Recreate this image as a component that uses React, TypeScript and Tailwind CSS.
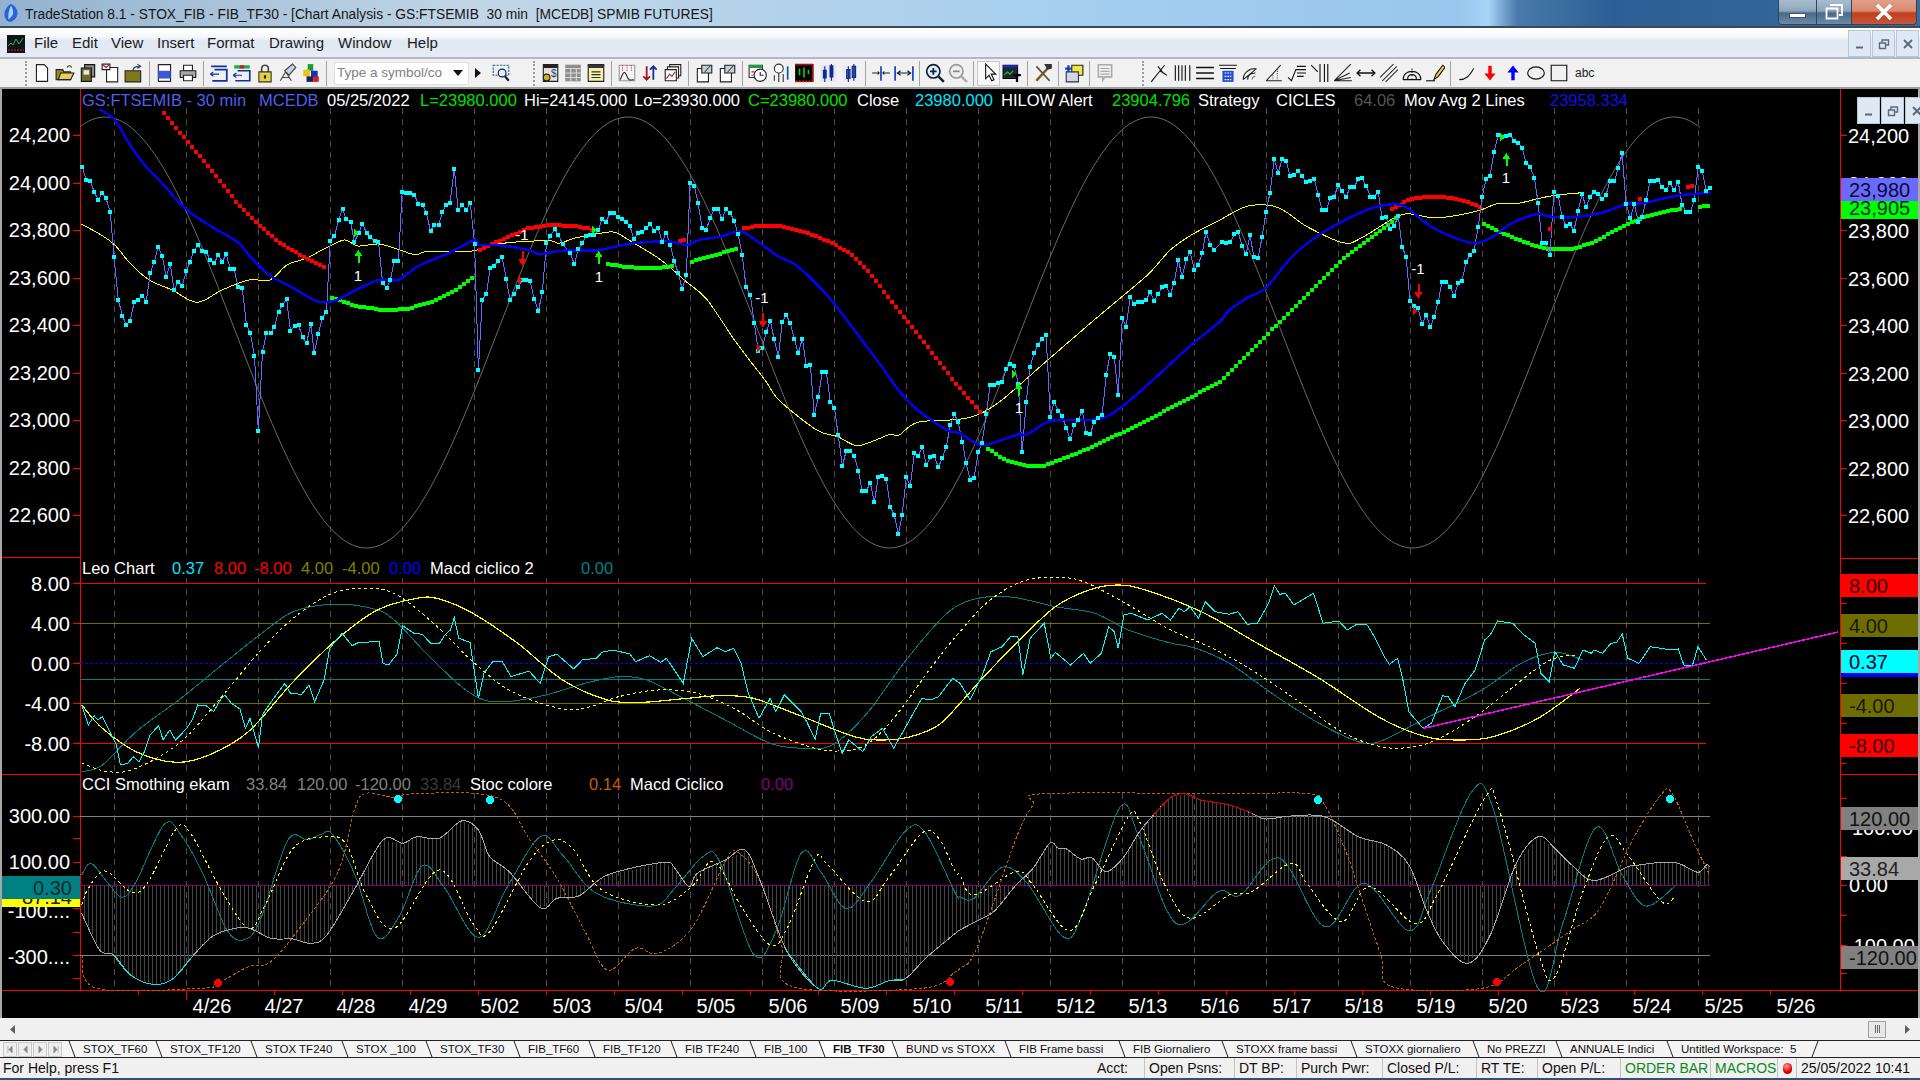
import type { ReactNode } from 'react'

type Pt = [number, number]

// traced values: flat x,y lists in the scale of each crop of the chart
const conv = (ox: number, oy: number, sx: number, sy: number) => (f: number[]): Pt[] => {
  const out: Pt[] = []
  for (let i = 0; i < f.length; i += 2) out.push([ox + f[i] / sx, oy + f[i + 1] / sy])
  return out
}
const z8 = conv(0, 90, 2.613, 3)
const z9 = conv(560, 100, 2.376, 3)
const z10 = conv(1200, 100, 2.8, 3)
const z11 = conv(80, 555, 1.782, 3)
const z12 = conv(960, 555, 1.782, 3)

const line = (p: Pt[]) => p.map((q) => q[0].toFixed(1) + ',' + q[1].toFixed(1)).join(' ')

const smooth = (p: Pt[]) => {
  let d = `M${p[0][0].toFixed(1)} ${p[0][1].toFixed(1)}`
  for (let i = 0; i < p.length - 1; i++) {
    const a = p[Math.max(i - 1, 0)]
    const b = p[i]
    const c = p[i + 1]
    const e = p[Math.min(i + 2, p.length - 1)]
    d += `C${(b[0] + (c[0] - a[0]) / 6).toFixed(1)} ${(b[1] + (c[1] - a[1]) / 6).toFixed(1)} ${(c[0] - (e[0] - b[0]) / 6).toFixed(1)} ${(c[1] - (e[1] - b[1]) / 6).toFixed(1)} ${c[0].toFixed(1)} ${c[1].toFixed(1)}`
  }
  return d
}

const yAt = (p: Pt[], x: number) => {
  for (let i = 0; i < p.length - 1; i++) {
    if (x >= p[i][0] && x <= p[i + 1][0]) {
      const t = (x - p[i][0]) / (p[i + 1][0] - p[i][0] || 1)
      return p[i][1] + (p[i + 1][1] - p[i][1]) * t
    }
  }
  return p[p.length - 1][1]
}

const sample = (p: Pt[]): Pt[] => {
  const out: Pt[] = []
  for (let x = Math.ceil(p[0][0] / 4) * 4; x <= p[p.length - 1][0]; x += 4) out.push([x, yAt(p, x)])
  return out
}

const price: Pt[] = [
  ...z8([215,230,225,270,236,272,246,305,257,330,267,308,277,325,288,365,298,500,309,630,320,678,330,705,340,692,351,635,361,630,372,617,382,635,393,548,403,515,413,472,424,497,434,560,445,523,455,600,466,575,476,588,487,542,497,515,507,482,518,464,528,484,539,485,549,510,560,520,570,495,581,515,591,493,602,537,612,538,622,590,633,595,644,705,654,730,665,797,675,1023,686,785,696,730,707,730,717,710,728,665,738,645,749,627,759,722,770,707,780,705,791,742,801,760,812,702,821,789,832,732,842,685,853,665,863,452,874,437,885,390,895,357,905,388,916,397,926,455,937,430,947,402,958,428,968,442,979,453,989,456,1000,580,1010,594,1020,570,1030,513,1041,513,1051,305,1062,308,1072,310,1083,315,1093,342,1104,346,1114,368,1125,423,1135,404,1146,404,1156,366,1166,345,1176,338,1187,236,1197,360,1208,345,1218,360,1229,340,1240,462,1250,840,1260,630,1271,612,1281,534,1291,528,1302,512,1312,500,1323,568,1333,630,1344,612,1354,592,1365,570,1375,570,1385,572,1396,628,1407,663,1417,607,1428,460,1438,438,1449,418,1459,434,1470,462,1490,490,1501,522,1511,478,1522,460,1532,437,1542,435,1553,435,1563,420]),
  ...z9([100,357,109,365,119,340,128,340,138,350,147,358,157,367,166,378,176,418,185,398,195,396,205,385,214,372,224,392,233,385,243,425,252,398,262,435,271,482,281,520,290,567,300,525,309,250,319,257,328,308,338,385,347,390,357,355,366,328,376,328,385,357,395,328,404,338,414,362,423,403,433,465,442,560,452,585,462,670,471,752,481,745,490,695,500,662,509,718,519,770,528,665,538,645,547,670,557,717,566,760,576,716,585,797,595,795,604,945,614,892,623,815,633,815,642,905,652,923,661,1005,671,1098,680,1052,690,1052,699,1067,709,1113,718,1173,728,1173,737,1148,747,1207,756,1130,766,1128,775,1137,785,1222,794,1244,804,1302,813,1244,823,1130,832,1158,842,1060,851,1067,861,1040,870,1095,880,1072,889,1067,899,1102,908,1075,918,1040,927,975,937,943,946,965,956,1025,965,1090,975,1140,984,1133,994,1055,1003,1028,1013,942,1022,855,1032,855,1041,850,1051,847,1060,808,1070,792,1079,797,1089,852,1098,1055,1108,905,1117,800,1127,758,1136,735,1146,717,1155,705,1165,950,1174,905,1184,932,1193,948,1203,985,1212,1017,1222,975,1231,960,1241,932,1250,998,1260,1002,1269,965,1279,955,1288,945,1298,825,1307,762,1317,770,1326,885,1336,655,1345,680,1355,592,1364,612,1374,605,1383,607,1393,600,1402,577,1412,603,1421,583,1431,562,1440,557,1450,585,1459,548,1469,480,1478,530,1488,478,1497,455,1507,510,1516,495,1526,460,1535,395,1545,435,1554,450]),
  ...z10([62,427,73,428,85,425,96,403,107,397,118,437,129,462,140,405,151,472,163,473,174,410,185,335,196,278,208,178,219,218,230,178,241,182,252,228,264,225,275,212,286,228,297,245,309,242,320,238,331,284,342,330,354,330,365,295,376,290,387,255,398,272,409,292,421,260,432,260,443,238,454,235,465,257,477,290,488,290,499,275,510,355,521,352,532,388,544,378,555,348,566,440,577,470,588,602,600,618,611,625,622,672,633,645,645,680,656,652,667,605,678,545,689,545,701,562,712,588,723,550,734,542,745,485,756,465,767,452,779,382,790,290,801,237,812,228,823,157,835,105,846,110,857,108,868,104,880,122,891,128,902,143,913,188,924,200,936,233,947,310,958,430,969,428,980,465,991,275,1003,288,1014,350,1025,378,1036,372,1047,392,1059,332,1070,283,1081,322,1092,292,1103,275,1115,282,1126,297,1137,284,1148,242,1160,244,1171,205,1182,160,1193,312,1205,355,1216,312,1227,365,1238,350,1249,300,1260,243,1272,242,1283,240,1294,262,1305,270,1316,250,1328,270,1339,245,1350,315,1361,335,1373,337,1384,300,1395,200,1406,212,1417,272,1428,264]),
]

const maBlue: Pt[] = [
  ...z8([260,58,300,90,340,165,385,235,420,275,470,340,500,370,560,415,620,455,650,495,675,525,710,560,760,590,820,630,850,637,880,630,930,600,990,570,1040,570,1090,530,1140,505,1180,485,1240,450,1250,465,1300,465,1380,480,1410,492,1470,482,1540,482]),
  ...z9([95,450,150,435,200,427,260,424,300,435,330,420,380,410,430,395,470,425,520,470,560,495,620,565,660,625,720,725,770,810,810,880,850,930,920,990,950,1000,1000,1035,1050,1020,1090,1003,1110,1003,1160,965,1210,960,1280,957,1330,925,1400,850,1500,735,1568,665]),
  ...z10([80,632,130,595,185,563,245,485,300,430,380,375,460,333,510,317,570,317,640,375,710,412,770,430,820,410,870,372,940,343,990,351,1050,351,1130,337,1193,312,1240,310,1300,295,1350,285,1430,278]),
]

const maYellow: Pt[] = [
  ...z8([212,402,260,432,300,465,340,520,390,570,450,600,515,637,580,600,650,570,705,570,750,525,800,505,850,475,900,450,935,468,990,462,1040,478,1085,494,1120,484,1230,484,1300,462,1430,452,1460,460,1500,445,1540,436]),
  ...z9([95,400,130,397,170,425,240,480,300,545,350,600,420,730,490,845,520,900,610,990,660,1010,705,1037,750,1020,785,1003,805,1006,850,967,950,958,1000,940,1050,900,1150,790,1260,670,1340,585,1400,520,1450,450,1500,405,1568,360]),
  ...z10([80,345,135,318,200,317,240,335,300,380,400,428,450,415,550,350,590,342,640,352,690,351,780,332,830,312,890,310,950,295,1000,285,1070,278]),
]

const reds: Pt[][] = [
  z8([423,62,490,155,560,250,620,340,680,408,730,458,800,505,855,535]),
  [...z8([1250,482,1300,455,1380,415,1440,405,1500,408,1540,415]), ...z9([0,375,40,378,80,390])],
  z9([280,423,300,420]),
  z9([430,387,470,377,520,378,580,395,640,425,690,460,740,525,800,625,870,735,940,850,1003,942]),
  z10([530,330,590,297,640,290,690,292,740,303,785,320]),
  z10([1225,300,1243,292]),
  z10([1360,262,1388,257]),
]

const greens: Pt[][] = [
  z8([860,620,930,648,1000,660,1060,658,1130,635,1190,600,1240,560]),
  z9([105,490,150,500,200,505,245,503,272,495]),
  z9([307,487,370,465,425,443]),
  [...z9([1010,1040,1060,1082,1110,1097,1150,1097,1230,1060,1340,995,1450,925,1568,845]), ...z10([100,800,200,690,300,585,400,478,500,397,555,350])],
  z10([790,370,870,410,930,435,975,448,1040,448,1100,428,1190,375,1260,345,1350,325]),
  z10([1395,320,1430,317]),
]

const cycle: Pt[] = []
for (let x = 80; x <= 1705; x += 6) cycle.push([x, 332.5 - 215.5 * Math.cos((2 * Math.PI * (x - 105)) / 523)])

const leo: Pt[] = [
  ...z11([3,450,15,510,25,482,32,495,40,485,52,525,65,570,72,630,85,625,95,605,105,620,115,590,125,540,140,512,148,555,160,525,170,555,182,535,190,520,200,495,210,450,225,452,238,470,250,435,258,420,270,445,285,462,295,520,303,490,318,578,325,480,345,430,365,385,375,415,395,418,408,390,418,440,435,375,445,280,467,235,485,272,497,262,533,260,540,325,550,330,565,297,575,212,595,235,610,238,625,265,640,267,650,240,660,225,667,188,675,250,695,262,710,430,720,355,735,320,752,318,768,365,800,348,820,385,835,305,850,298,880,342,895,315,920,310,930,292,950,285,980,297,990,320,1015,302,1035,322,1045,310,1075,385,1090,250,1110,305,1135,278,1150,290,1165,280,1178,325,1190,410,1210,490,1230,430,1240,470,1255,420,1285,470,1295,500,1310,553,1320,475,1335,475,1345,530,1358,595,1370,555,1395,590,1410,545,1430,520,1450,580,1470,520,1490,460,1500,430,1515,435,1530,425,1555,370]),
  ...z12([0,385,18,435,40,360,55,290,75,275,90,245,103,245,112,360,125,250,150,205,162,310,170,292,197,330,220,295,232,325,252,295,265,215,275,230,282,280,292,180,305,175,335,195,360,175,375,195,390,160,400,170,410,155,425,190,437,140,455,170,480,178,495,170,512,208,530,205,550,145,560,92,570,118,580,115,595,150,610,135,630,115,647,205,675,198,690,225,705,210,725,208,740,250,755,302,765,328,780,310,790,380,800,470,825,520,840,505,860,422,870,425,882,455,900,385,918,345,935,255,945,240,958,198,985,205,1005,240,1025,265,1035,355,1050,380,1060,290,1075,330,1095,340,1110,285,1125,295,1130,285,1145,295,1160,265,1170,262,1180,237,1190,310,1210,325,1230,275,1250,280,1265,285,1280,282,1290,330,1305,333,1315,275,1330,315]),
]

const macdTeal: Pt[] = [
  ...z11([3,650,40,630,100,530,180,430,260,320,320,240,380,170,450,148,520,160,560,195,620,300,680,395,720,435,760,440,830,420,900,385,960,365,1010,375,1070,425,1150,495,1230,565,1290,580,1340,570,1400,480,1470,320,1530,200]),
  ...z12([0,148,50,125,100,128,170,155,240,175,300,225,370,262,420,280,480,325,560,420,640,505,710,560,750,558,830,490,930,405,1000,325,1060,292,1110,315]),
]

const macdYellow: Pt[] = [
  ...z11([3,450,40,520,100,590,170,622,230,600,300,530,380,380,460,250,530,165,600,130,640,132,700,175,780,265,860,375,940,435,1000,442,1070,432,1140,422,1200,430,1280,480,1380,545,1430,555,1480,545,1530,510]),
  ...z12([0,445,40,370,100,265,170,155,230,105,280,90,330,105,430,170,530,265,640,370,750,490,830,545,890,555,950,545,1030,490,1105,400]),
]

const macdDash: Pt[] = [
  ...z11([3,625,50,650,100,640,180,560,250,430,320,290,380,190,450,115,520,100,570,125,640,220,700,320,770,410,860,462,910,455,960,425,1030,405,1100,415,1170,465,1230,530,1300,575,1350,588,1400,570,1450,490,1520,330]),
  ...z12([0,230,50,140,110,80,170,67,220,80,290,140,370,220,450,280,520,345,600,435,680,530,750,575,810,575,860,545,930,470,1020,350,1060,310,1100,300]),
]

const cci: Pt[] = [
  ...z11([3,1075,35,1185,60,1200,90,1260,130,1288,165,1272,200,1205,240,1140,295,1118,340,1150,380,1152,410,1165,440,1140,490,1000,540,855,575,865,600,845,640,850,680,798,710,825,730,905,765,950,820,1058,850,1030,890,1022,940,960,1040,922,1060,940,1085,995,1100,955,1150,915,1185,885,1215,990,1260,1190,1315,1300,1340,1276,1400,1300,1440,1278,1470,1272,1510,1205,1560,1135]),
  ...z12([0,1125,30,1098,60,1070,100,990,130,940,160,865,175,880,190,882,215,912,235,908,260,950,290,910,320,830,345,780,375,728,400,716,430,735,480,750,520,775,545,792,590,783,650,785,710,845,760,870,800,930,830,1060,860,1160,905,1225,945,1140,990,930,1030,845,1060,880,1090,930,1130,977,1190,935,1210,930,1250,922,1280,925,1315,952,1330,930,1336,935]),
]

const cciTeal: Pt[] = [
  ...z11([3,960,20,925,50,985,75,1027,100,980,150,808,180,840,220,960,260,1120,290,1155,320,1100,370,857,405,855,430,838,450,838,490,960,530,1147,570,1080,610,932,650,1000,710,1147,760,1000,820,845,860,900,920,1015,1020,1053,1060,1000,1110,905,1140,920,1200,1197,1240,1130,1285,895,1320,950,1365,1060,1410,980,1470,830,1505,830,1560,1015]),
  ...z12([0,1025,25,1030,75,937,120,985,185,1147,220,1070,285,757,320,850,385,1105,460,1010,500,1020,570,910,650,1115,720,985,800,1127,840,1000,910,715,950,760,1030,1300,1075,1100,1133,818,1180,960,1222,1053,1275,992]),
]

const cciYellow: Pt[] = [
  ...z11([3,1050,15,1000,45,948,90,1010,120,985,170,825,195,830,250,1000,300,1120,330,1050,380,880,440,845,475,870,510,1020,560,1120,640,945,700,1105,730,1130,800,920,845,855,880,885,930,1005,1030,1050,1090,995,1130,920,1180,1060,1230,1170,1260,1120,1310,912,1330,925,1400,1040,1440,970,1500,835,1530,850,1560,950]),
  ...z12([0,960,25,1020,100,950,130,990,195,1127,240,990,300,785,320,800,365,990,410,1090,480,1020,520,1010,590,925,620,990,680,1100,730,995,810,1105,850,1020,935,730,960,760,1030,1190,1060,1265,1110,1010,1155,845,1190,900,1250,1040,1275,1022]),
]

const cciOrange: Pt[] = [
  ...z11([3,1200,30,1300,215,1300,246,1285,300,1235,340,1220,400,1100,460,950,490,760,510,715,560,727,590,717,700,715,760,745,800,850,850,970,900,1130,940,1245,990,1180,1030,1195,1090,1120,1150,920,1170,890,1210,970,1250,1170,1270,1295,1500,1300,1560,1250]),
  ...z12([0,1240,30,1180,100,850,130,750,150,716,480,716,620,716,650,750,690,900,710,1000,750,1200,770,1295,930,1300,1000,1230,1090,1125,1140,1060,1200,850,1250,718,1270,718,1310,870,1336,960]),
]

const hatch = sample(cci)
const dayLines = Array.from({ length: 23 }, (_, i) => 114 + i * 72)
const dates = ['4/26','4/27','4/28','4/29','5/02','5/03','5/04','5/05','5/06','5/09','5/10','5/11','5/12','5/13','5/16','5/17','5/18','5/19','5/20','5/23','5/24','5/25','5/26']
const dateTicks = [138, 186, ...Array.from({ length: 23 }, (_, i) => 274 + i * 68)]

const legend: [number, number, string, string][] = [
  [82, 106, '#4f5fe8', 'GS:FTSEMIB - 30 min'],
  [259, 106, '#4f5fe8', 'MCEDB'],
  [327, 106, '#ffffff', '05/25/2022'],
  [420, 106, '#00e000', 'L=23980.000'],
  [524, 106, '#ffffff', 'Hi=24145.000'],
  [634, 106, '#ffffff', 'Lo=23930.000'],
  [748, 106, '#00e000', 'C=23980.000'],
  [857, 106, '#ffffff', 'Close'],
  [915, 106, '#00e5ff', '23980.000'],
  [1001, 106, '#ffffff', 'HILOW Alert'],
  [1112, 106, '#00e000', '23904.796'],
  [1198, 106, '#ffffff', 'Strategy'],
  [1276, 106, '#ffffff', 'CICLES'],
  [1354, 106, '#555555', '64.06'],
  [1404, 106, '#ffffff', 'Mov Avg 2 Lines'],
  [1550, 106, '#1010e0', '23958.334'],
  [82, 574, '#ffffff', 'Leo Chart'],
  [172, 574, '#00e5ff', '0.37'],
  [214, 574, '#ff0000', '8.00'],
  [254, 574, '#ff0000', '-8.00'],
  [301, 574, '#808000', '4.00'],
  [342, 574, '#808000', '-4.00'],
  [389, 574, '#0000ff', '0.00'],
  [430, 574, '#ffffff', 'Macd ciclico 2'],
  [581, 574, '#008080', '0.00'],
  [82, 790, '#ffffff', 'CCI Smothing ekam'],
  [246, 790, '#808080', '33.84'],
  [297, 790, '#808080', '120.00'],
  [355, 790, '#808080', '-120.00'],
  [420, 790, '#3a3a3a', '33.84'],
  [470, 790, '#ffffff', 'Stoc colore'],
  [589, 790, '#c06000', '0.14'],
  [630, 790, '#ffffff', 'Macd Ciclico'],
  [761, 790, '#800080', '0.00'],
]

const prices = ['24,200','24,000','23,800','23,600','23,400','23,200','23,000','22,800','22,600']

const UpArrow = ({ x, y }: { x: number; y: number }) => (
  <path d={`M${x - 1} ${y + 13}V${y + 6}H${x - 4}L${x} ${y}L${x + 4} ${y + 6}H${x + 1}V${y + 13}Z`} fill="#00ff00" />
)
const DownArrow = ({ x, y }: { x: number; y: number }) => (
  <path d={`M${x - 1} ${y}V${y + 8}H${x - 4}L${x} ${y + 15}L${x + 4} ${y + 8}H${x + 1}V${y}Z`} fill="#ff0000" />
)

function Chart() {
  return (
    <svg viewBox="2 89 1916 929" shapeRendering="crispEdges" className="h-[929px] w-[1916px] font-['Liberation_Sans',sans-serif]">
      {/* frame */}
      <path d="M80.5 89V990M1840.5 89V990" stroke="#ff0000" fill="none" />
      <path d="M2 990.5H1918M2 774.5H80M1840 774.5H1918M1840 558.5H1918M2 557.5H80" stroke="#ff0000" fill="none" />

      {/* day separators */}
      {dayLines.map((x) => (
        <path key={x} d={`M${x}.5 108V557M${x}.5 578V772M${x}.5 793V990`} stroke="#4c4c4c" strokeDasharray="6 5" fill="none" />
      ))}

      {/* price panel */}
      <path d={smooth(cycle)} stroke="#6a6a6a" fill="none" shapeRendering="auto" />
      <path d={smooth(maYellow)} stroke="#ffff00" fill="none" />
      {greens.map((g, i) => sample(g).map((q) => <rect key={`g${i}-${q[0]}`} x={q[0] - 2} y={q[1] - 2} width="4" height="4" fill="#00ff00" />))}
      {reds.map((g, i) => sample(g).map((q) => <rect key={`r${i}-${q[0]}`} x={q[0] - 2} y={q[1] - 2} width="4" height="4" fill="#ff0000" />))}
      <polyline points={line(price)} stroke="#6868ff" fill="none" />
      <path d={smooth(maBlue)} stroke="#0000ff" strokeWidth="2.4" fill="none" />
      {price.map((q, i) => <rect key={i} x={q[0] - 2} y={q[1] - 2} width="4" height="4" fill="#00ffff" />)}

      <UpArrow x={358.5} y={250} /><text x={358} y={281} fontSize="15" fill="#fff" textAnchor="middle">1</text>
      <UpArrow x={598.7} y={251} /><text x={599} y={282} fontSize="15" fill="#fff" textAnchor="middle">1</text>
      <UpArrow x={1018.7} y={383} /><text x={1019} y={413} fontSize="15" fill="#fff" textAnchor="middle">1</text>
      <UpArrow x={1506.5} y={153} /><text x={1506} y={183} fontSize="15" fill="#fff" textAnchor="middle">1</text>
      <DownArrow x={522.5} y={251} /><text x={522} y={240} fontSize="15" fill="#fff" textAnchor="middle">-1</text>
      <DownArrow x={763} y={313} /><text x={762} y={303} fontSize="15" fill="#fff" textAnchor="middle">-1</text>
      <DownArrow x={1418.5} y={284} /><text x={1418} y={274} fontSize="15" fill="#fff" textAnchor="middle">-1</text>
      <path d="M354 229l5 4-5 4zM592 226l5 4-5 4zM1012 370l5 4-5 4zM1500 133l5 4-5 4z" fill="#00ff00" />
      <path d="M518 276l5 4-5 4zM757 344l5 4-5 4zM1413 307l5 4-5 4z" fill="#ff0000" />
      <rect x="1548" y="227" width="4" height="4" fill="#ff0000" />

      {/* leo panel */}
      <path d="M80 583.5H1706M80 743.5H1706" stroke="#ff0000" fill="none" />
      <path d="M80 623.5H1710M80 703.5H1710" stroke="#707000" fill="none" />
      <path d="M80 679.5H1710" stroke="#008080" fill="none" />
      <path d="M80 663.5H1710" stroke="#0000ff" strokeWidth="1.5" strokeDasharray="3 2" fill="none" />
      <path d={smooth(macdTeal)} stroke="#008080" fill="none" />
      <path d={smooth(macdDash)} stroke="#ffff00" strokeDasharray="3 3" fill="none" />
      <path d={smooth(macdYellow)} stroke="#ffff00" strokeWidth="1.2" fill="none" />
      <polyline points={line(leo)} stroke="#00ffff" fill="none" />
      <path d="M1423 728.5L1838 632" stroke="#ff00ff" strokeWidth="1.5" fill="none" />

      {/* cci panel */}
      <path d="M80 816.5H1710M80 955.5H1710" stroke="#808080" fill="none" />
      {hatch.map((q) => <path key={q[0]} d={`M${q[0]}.5 885.5V${q[1].toFixed(1)}`} stroke="#444444" fill="none" />)}
      <path d="M80 885.5H1710" stroke="#800080" fill="none" />
      <path d={smooth(cciTeal)} stroke="#008080" fill="none" />
      <path d={smooth(cciYellow)} stroke="#ffff00" strokeDasharray="3 3" fill="none" />
      <path d={smooth(cciOrange)} stroke="#c06000" strokeDasharray="3 2" fill="none" />
      <path d={smooth(cci)} stroke="#a8a8a8" fill="none" />
      <path d={smooth(cci.filter((q) => q[0] > 110 && q[0] < 196))} stroke="#00e8f0" fill="none" />
      <path d={smooth(cci.filter((q) => q[0] > 785 && q[0] < 905))} stroke="#00e8f0" fill="none" />
      <path d={smooth(cci.filter((q) => q[0] > 1460 && q[0] < 1490))} stroke="#00e8f0" fill="none" />
      <path d={smooth(cci.filter((q) => q[0] > 1150 && q[0] < 1262))} stroke="#e00000" fill="none" />
      <circle cx="398" cy="799" r="4" fill="#00ffff" />
      <circle cx="490" cy="800" r="4" fill="#00ffff" />
      <circle cx="1318" cy="800" r="4" fill="#00ffff" />
      <circle cx="1670" cy="799" r="4" fill="#00ffff" />
      <circle cx="218" cy="983" r="4" fill="#ff0000" />
      <circle cx="950" cy="982" r="4" fill="#ff0000" />
      <circle cx="1497" cy="982" r="4" fill="#ff0000" />

      {/* legends */}
      {legend.map(([x, y, c, t]) => (
        <text key={x + '-' + y} x={x} y={y} fontSize="16.5" fill={c}>{t}</text>
      ))}

      {/* left axis */}
      {prices.map((p, i) => (
        <g key={p}>
          <path d={`M73 ${135.5 + i * 47.5}H80`} stroke="#ff0000" fill="none" />
          <text x={70} y={142 + i * 47.5} fontSize="20" fill="#fff" textAnchor="end">{p}</text>
        </g>
      ))}
      {['8.00','4.00','0.00','-4.00','-8.00'].map((p, i) => (
        <g key={p}>
          <path d={`M73 ${583.5 + i * 40}H80`} stroke="#ff0000" fill="none" />
          <text x={70} y={591 + i * 40} fontSize="20" fill="#fff" textAnchor="end">{p}</text>
        </g>
      ))}
      {[816, 838, 862, 885, 908, 932, 955, 978].map((y) => <path key={y} d={`M73 ${y}.5H80`} stroke="#ff0000" fill="none" />)}
      <text x={70} y={823} fontSize="20" fill="#fff" textAnchor="end">300.00</text>
      <text x={70} y={869} fontSize="20" fill="#fff" textAnchor="end">100.00</text>
      <text x={70} y={918} fontSize="20" fill="#fff" textAnchor="end">-100....</text>
      <text x={70} y={964} fontSize="20" fill="#fff" textAnchor="end">-300....</text>
      <rect x="2" y="888" width="78" height="19" fill="#ffff00" />
      <text x={72} y={904} fontSize="20" fill="#222" textAnchor="end">-87.14</text>
      <rect x="2" y="876" width="78" height="23" fill="#008080" />
      <text x={72} y={895} fontSize="20" fill="#0a2a30" textAnchor="end">0.30</text>

      {/* right axis */}
      {prices.map((p, i) => (
        <g key={p}>
          <path d={`M1841 ${135.5 + i * 47.5}H1847`} stroke="#ff0000" fill="none" />
          <text x={1848} y={143 + i * 47.5} fontSize="20" fill="#fff">{p}</text>
        </g>
      ))}
      <rect x="1841" y="178" width="77" height="23" fill="#6a6aff" />
      <rect x="1841" y="201" width="77" height="18" fill="#00ff00" />
      <text x={1849} y={197} fontSize="20" fill="#0a0a30">23,980</text>
      <text x={1849} y={215} fontSize="20" fill="#033">23,905</text>

      {[603, 643, 683, 723, 763, 798, 856, 885, 915, 945, 973].map((y) => <path key={y} d={`M1840 ${y}.5H1847`} stroke="#ff0000" fill="none" />)}
      <rect x="1841" y="574" width="77" height="23" fill="#ff0000" />
      <rect x="1841" y="614" width="77" height="23" fill="#6e6e00" />
      <rect x="1841" y="650" width="77" height="23" fill="#00ffff" />
      <rect x="1841" y="673" width="77" height="4" fill="#0000ff" />
      <rect x="1841" y="694" width="77" height="23" fill="#6e6e00" />
      <rect x="1841" y="734" width="77" height="23" fill="#ff0000" />
      <text x={1849} y={593} fontSize="20" fill="#300">8.00</text>
      <text x={1849} y={633} fontSize="20" fill="#1a1a00">4.00</text>
      <text x={1849} y={669} fontSize="20" fill="#003">0.37</text>
      <text x={1849} y={713} fontSize="20" fill="#1a1a00">-4.00</text>
      <text x={1849} y={753} fontSize="20" fill="#300">-8.00</text>
      <text x={1852} y={835} fontSize="20" fill="#fff">100.00</text>
      <rect x="1841" y="807" width="77" height="23" fill="#808080" />
      <text x={1849} y={826} fontSize="20" fill="#111">120.00</text>
      <text x={1849} y={892} fontSize="20" fill="#fff">0.00</text>
      <rect x="1841" y="857" width="77" height="23" fill="#a8a8a8" />
      <text x={1849} y={876} fontSize="20" fill="#222">33.84</text>
      <text x={1847} y={953} fontSize="20" fill="#fff">-100.00</text>
      <rect x="1841" y="946" width="77" height="23" fill="#808080" />
      <text x={1849} y={965} fontSize="20" fill="#111">-120.00</text>

      {/* time axis */}
      {dateTicks.map((x, i) => <path key={i} d={`M${x}.5 990V${x === 186 ? 1000 : 995}`} stroke="#ff0000" fill="none" />)}
      {dates.map((d, i) => (
        <text key={d} x={212 + i * 72} y={1013} fontSize="20" fill="#fff" textAnchor="middle">{d}</text>
      ))}
    </svg>
  )
}

/* ---------- toolbar icons ---------- */

const S = ({ children }: { children: ReactNode }) => (
  <svg viewBox="0 0 18 18" className="h-[20px] w-[20px]" fill="none">{children}</svg>
)

const icons: Record<string, ReactNode> = {
  doc: <S><path d="M4 1.5h7l3 3v12H4z" fill="#fff" stroke="#222" /></S>,
  open: <S><path d="M1 6h6l1 2h6v7H1z" fill="#9a8a20" stroke="#222" /><path d="M3 15l2-6h12l-3 6z" fill="#e6cf60" stroke="#222" /><path d="M11 4c1-2 3-2 4 0" stroke="#222" /></S>,
  copy: <S><path d="M6 1.5h9v11H6z" fill="#888" stroke="#111" /><path d="M3 4.5h9v12H3z" fill="#6c6a2a" stroke="#111" /><path d="M5 6.5h5v4H5z" fill="#e8e8e8" /></S>,
  note: <S><path d="M5 4h10v13H5z" fill="#fff" stroke="#222" /><path d="M1 1h7v5H1z" fill="#fff" stroke="#222" /><path d="M2 2l2.5 2L7 2" stroke="#c00" /></S>,
  oliveUp: <S><path d="M1 7h14v10H1z" fill="#7e7a1c" stroke="#222" /><path d="M8 7c0-3 3-4 6-4M12 1l3 2-3 2" stroke="#246" /></S>,
  blueDoc: <S><path d="M3 1.5h11v15H3z" fill="#fff" stroke="#223" /><path d="M3 7h11v7H3z" fill="#3a5ad8" /></S>,
  printer: <S><path d="M5 2h8v5H5z" fill="#fff" stroke="#222" /><path d="M2 7h14v6H2z" fill="#aaa" stroke="#222" /><path d="M5 11h8v5H5z" fill="#fff" stroke="#222" /></S>,
  winA: <S><path d="M2 3h14M5 6h11v10H3" stroke="#1030a0" strokeWidth="1.6" /><path d="M1 10h8M1 10l3-2M1 10l3 2" stroke="#1030a0" /></S>,
  winB: <S><path d="M2 2h14v3H2z" fill="#18b040" /><path d="M7 2h4v3H7z" fill="#d02020" /><path d="M5 7h11v9H3" stroke="#1030a0" strokeWidth="1.5" /><path d="M1 11h8M1 11l3-2M1 11l3 2" stroke="#1030a0" /></S>,
  lock: <S><path d="M6 8V5a3 3 0 0 1 6 0v3" stroke="#444" strokeWidth="1.5" /><path d="M3.5 8h11v9h-11z" fill="#e8d040" stroke="#333" /><path d="M8 11h2v3H8z" fill="#222" /></S>,
  dish: <S><path d="M2 16l5-8 5 8M4 13h6" stroke="#444" /><path d="M6 7l7-6 3 3-6 7z" fill="#c8d0e8" stroke="#444" /></S>,
  cubes: <S><path d="M6 1h5v6H6z" fill="#1a9a30" /><path d="M2 6h6v6H2z" fill="#e8c810" /><path d="M9 7h6v6H9z" fill="#1a30c0" /><path d="M5 12h6v5H5z" fill="#202060" /><path d="M11 12h5v5h-5z" fill="#d02020" /></S>,
  search: <S><path d="M2 2h14v9H2z" stroke="#2060a0" strokeDasharray="2 1" /><circle cx="10" cy="9" r="3.5" fill="#e0f0ff" stroke="#123" /><path d="M12.5 12l3.5 4" stroke="#123" strokeWidth="2" /></S>,
  dollar: <S><path d="M3 1.5h13v15H3z" fill="#e4e4d0" stroke="#222" /><path d="M3 1.5h13v3H3z" fill="#222" /><circle cx="6" cy="13" r="3" fill="#d0b020" stroke="#222" /><text x="10" y="13" fontSize="9" fill="#123cb0">$</text></S>,
  greyTable: <S><path d="M2 1.5h14v15H2z" fill="#8e8e8e" /><path d="M2 5h14M2 9h14M2 13h14M7 5v11M12 5v11" stroke="#d8d8d8" /></S>,
  table: <S><path d="M2 1.5h14v15H2z" fill="#f4f0a8" stroke="#222" /><path d="M2 1.5h14v3H2z" fill="#333" /><path d="M5 8h8M5 10.5h8M5 13h8" stroke="#333" /></S>,
  wave: <S><path d="M2 16V2h14v14z" fill="#f4f4f4" stroke="#999" /><path d="M3 15c3-8 4-8 6-3s3 3 6 3" stroke="#222" /><path d="M5 2v5M9 2v5M13 2v5" stroke="#d02040" strokeDasharray="1 1" /></S>,
  updown: <S><path d="M6 3v12M3 12l3 3 3-3" stroke="#a01020" strokeWidth="1.6" /><path d="M12 15V3M9 6l3-3 3 3" stroke="#103090" strokeWidth="1.6" /></S>,
  stack: <S><path d="M6 1.5h10v10H6z" fill="#fff" stroke="#222" /><path d="M4 3.5h10v10H4z" fill="#fff" stroke="#222" /><path d="M2 6h10v10H2z" fill="#fff" stroke="#222" /><path d="M3 14l3-4 2 2 3-4" stroke="#c02020" /></S>,
  note2: <S><path d="M3 5h10v12H3z" fill="#fff" stroke="#222" /><path d="M7 2h9v7H7z" fill="#ccc" stroke="#222" /><path d="M9 9l6-7" stroke="#357" /></S>,
  cal: <S><path d="M1 2h12v11H1z" fill="#fff" stroke="#333" /><path d="M1 2h12v2.5H1z" fill="#18a040" /><circle cx="11" cy="11" r="5.5" fill="#fff" stroke="#222" /><path d="M11 8v3h3" stroke="#222" /><path d="M3 8h3M3 11h2" stroke="#c02020" /></S>,
  dials: <S><circle cx="7" cy="5" r="4" fill="#fff" stroke="#333" /><path d="M7 9v8M3 11v5M11 10v7" stroke="#333" /><path d="M15 3v12" stroke="#1050a0" strokeWidth="1.5" /></S>,
  blackBars: <S><path d="M1 1h16v16H1z" fill="#000" /><path d="M1 1.5h16M17 1v16" stroke="#a01020" strokeWidth="1.5" /><path d="M1 16.5h16" stroke="#e01010" strokeWidth="1.5" strokeDasharray="2 1" /><path d="M5 5v6M9 4v9M13 6v4" stroke="#10d020" strokeWidth="1.4" /></S>,
  bars: <S><path d="M3 1.5h14v15H3z" fill="#e4e8f4" /><path d="M7 6v8M13 2v11" stroke="#102a8a" strokeWidth="3.5" /><path d="M7 3v14M13 1v15" stroke="#102a8a" /></S>,
  candles: <S><path d="M2 2h14v14H2z" fill="#e8eaf4" /><path d="M6 6h3v8H6zM11 3h3v10h-3z" fill="#5a60b0" stroke="#102a8a" /><path d="M7.5 3v14M12.5 1v15" stroke="#102a8a" /></S>,
  tickIn: <S><path d="M1 9h5M12 9h5" stroke="#123" /><path d="M6 7l2 2-2 2M12 7l-2 2 2 2" fill="#123" /><path d="M9 3v13" stroke="#1040b0" strokeWidth="1.5" /></S>,
  tickOut: <S><path d="M1 3v13M17 3v13" stroke="#1040b0" strokeWidth="1.5" /><path d="M3 9h12M6 7L3 9l3 2M12 7l3 2-3 2" stroke="#123" /></S>,
  zoomIn: <S><circle cx="7.5" cy="7.5" r="6" fill="#e0ecff" stroke="#123" strokeWidth="1.5" /><path d="M4.5 7.5h6M7.5 4.5v6" stroke="#123" strokeWidth="1.6" /><path d="M12 12l5 5" stroke="#123" strokeWidth="2.2" /></S>,
  zoomOut: <S><circle cx="7.5" cy="7.5" r="6" fill="#eee" stroke="#9a9a9a" strokeWidth="1.5" /><path d="M4.5 7.5h6" stroke="#888" strokeWidth="1.6" /><path d="M12 12l5 5" stroke="#aaa" strokeWidth="2.2" /></S>,
  pointer: <S><path d="M6 1v13l3-3 2.5 5 2-1-2.5-5h4z" fill="#fff" stroke="#111" /></S>,
  chartT: <S><path d="M1 2h13v12H1z" fill="#223" stroke="#000" /><path d="M1 2h13v2H1z" fill="#1030d0" /><path d="M2 11l3-3 2 2 3-3" stroke="#10d020" /><path d="M10 11h7M13.5 11v6" stroke="#000" strokeWidth="2" /></S>,
  tools: <S><path d="M3 16L14 4" stroke="#7a5a10" strokeWidth="2.2" /><path d="M3 3l12 13" stroke="#555" strokeWidth="1.6" /><path d="M10 1h7v4l-4 1z" fill="#333" /></S>,
  addChart: <S><path d="M7 2h10v9H7z" fill="#f0e840" stroke="#222" /><path d="M2 8h11v9H2z" fill="#d4d4e8" stroke="#334" /><path d="M4 2v6M1 5h6" stroke="#1040c0" strokeWidth="2" /></S>,
  greyNote: <S><path d="M3 1.5h12v11H9l-2 3v-3H3z" fill="#eee" stroke="#aaa" strokeWidth="1.4" /><path d="M5 5h8M5 7.5h8M5 10h8" stroke="#aaa" /></S>,
  pitch: <S><path d="M2 17L10 7M8 3l4 5M14 2l-4 5 6 4" stroke="#111" /></S>,
  vlines: <S><path d="M3 2v14M6 2v14M9 2v14M12 2v14M16 2v14" stroke="#111" /></S>,
  hlines: <S><path d="M1 4h16M1 9h16M1 14h16" stroke="#111" strokeWidth="1.3" /></S>,
  calc: <S><path d="M1 2h16M2 5h14" stroke="#111" /><path d="M4 7h10v10H4z" fill="#2050c8" /><path d="M6 9h6M6 12h6M6 15h6" stroke="#fff" strokeDasharray="1.5 1" /></S>,
  arcs: <S><path d="M2 15c0-6 5-10 11-10M6 15c0-4 3-6 7-6M2 15L14 5" stroke="#222" /><path d="M10 15c0-2 1-3 3-3" stroke="#888" /></S>,
  tri: <S><path d="M2 16L15 2M2 16h14" stroke="#222" /><path d="M8 9v7M12 5v11" stroke="#555" strokeDasharray="1 1" /></S>,
  steps: <S><path d="M1 13l3 3 4-10h9" stroke="#111" /><path d="M9 3h8M9 9h8M9 12h6" stroke="#111" /></S>,
  vfan: <S><path d="M1 2l6 6M9 1v16M13 1v16M16 1v16" stroke="#111" /></S>,
  fan: <S><path d="M1 16L16 1M1 16h16M1 16l14-7M1 16l15-3" stroke="#222" /></S>,
  dblArrow: <S><path d="M1 9h16M4 6L1 9l3 3M14 6l3 3-3 3" stroke="#111" strokeWidth="1.2" /></S>,
  diag: <S><path d="M1 13L13 1M3 16L16 3M6 17L17 6" stroke="#333" /></S>,
  arch: <S><path d="M1 15C1 5 17 5 17 15M5 15C5 9 13 9 13 15M1 15h16" stroke="#111" /><path d="M9 5v10" stroke="#111" strokeDasharray="1 2" /></S>,
  pencil: <S><path d="M1 16h8" stroke="#111" /><path d="M8 15l2-5 6-8 2 2-6 8z" fill="#f0d840" stroke="#111" /></S>,
  curve: <S><path d="M2 15c6 0 9-3 13-10" stroke="#111" /></S>,
  redDown: <S><path d="M8 3h2v7h3l-4 5-4-5h3z" fill="#f00" stroke="#f00" /></S>,
  blueUp: <S><path d="M8 15h2V8h3L9 3 5 8h3z" fill="#00f" stroke="#00f" /></S>,
  ellipse: <S><ellipse cx="9" cy="9" rx="7.5" ry="5.5" stroke="#111" /></S>,
  rect: <S><path d="M2 2h14v14H2z" stroke="#111" /></S>,
}
icons.blueDoc2 = icons.note2

const bar1 = ['doc','open','copy','note','oliveUp',8,'blueDoc','printer',8,'winA','winB','lock','dish','cubes',8]
const bar2 = ['dollar','greyTable','table',8,'wave','updown','stack',8,'note2','blueDoc2',8,'cal','dials','blackBars','bars','candles',8,'tickIn','tickOut',8,'zoomIn','zoomOut',8,'pointer','chartT',8,'tools',8,'addChart',8,'greyNote']
const bar3 = ['pitch','vlines','hlines','calc','arcs','tri','steps','vfan','fan','dblArrow','diag','arch','pencil',9,'curve','redDown','blueUp','ellipse','rect']

const ToolItem = ({ item }: { item: string | number }) => {
  if (typeof item === 'number') {
    return (
      <div className={item === 9 ? 'flex w-[9px] justify-center' : 'flex w-[8px] justify-center'}>
        <div className="h-[25px] w-px bg-[#a4a4a4]" />
      </div>
    )
  }
  if (item === 'pointer') {
    return <div className="flex h-[25px] w-[23px] items-center justify-center border border-[#c8c8c8] bg-[#f8f8f8]">{icons[item]}</div>
  }
  return <div className="flex w-[23px] justify-center">{icons[item]}</div>
}

const Grip = () => <div className="h-[25px] w-[2px] border-l-2 border-dotted border-[#9a9a9a]" />

const MdiButton = ({ kind }: { kind: 'min' | 'max' | 'close' }) => (
  <div className="flex h-[27px] w-[23px] items-center justify-center border border-[#b8c8d8] bg-[#dfe9f5]">
    <svg viewBox="0 0 12 12" className="h-[12px] w-[12px]" fill="none" stroke="#5a6a7a" strokeWidth="1.4">
      {kind === 'min' && <path d="M2 9.5h7" strokeWidth="2" />}
      {kind === 'max' && <path d="M1.5 5h6v5.5h-6zM4 5V2h6.5v5H8" />}
      {kind === 'close' && <path d="M2 2l8 8M10 2l-8 8" strokeWidth="2" />}
    </svg>
  </div>
)

const menus: [string, string][] = [
  ['File', 'w-[38px]'],
  ['Edit', 'w-[39px]'],
  ['View', 'w-[46px]'],
  ['Insert', 'w-[50px]'],
  ['Format', 'w-[62px]'],
  ['Drawing', 'w-[69px]'],
  ['Window', 'w-[69px]'],
  ['Help', 'w-[40px]'],
]

const tabs: [string, string][] = [
  ['STOX_TF60', 'w-[87px]'],
  ['STOX_TF120', 'w-[95px]'],
  ['STOX TF240', 'w-[91px]'],
  ['STOX _100', 'w-[84px]'],
  ['STOX_TF30', 'w-[88px]'],
  ['FIB_TF60', 'w-[75px]'],
  ['FIB_TF120', 'w-[82px]'],
  ['FIB TF240', 'w-[79px]'],
  ['FIB_100', 'w-[69px]'],
  ['FIB_TF30', 'w-[73px]'],
  ['BUND vs STOXX', 'w-[113px]'],
  ['FIB Frame bassi', 'w-[114px]'],
  ['FIB Giornaliero', 'w-[103px]'],
  ['STOXX frame bassi', 'w-[129px]'],
  ['STOXX giornaliero', 'w-[122px]'],
  ['No PREZZI', 'w-[83px]'],
  ['ANNUALE Indici', 'w-[111px]'],
  ['Untitled Workspace:  5', 'w-[135px]'],
]

const statusCells: [string, string, string][] = [
  ['Open Psns:', 'w-[90px]', 'text-[#111]'],
  ['DT BP:', 'w-[62px]', 'text-[#111]'],
  ['Purch Pwr:', 'w-[86px]', 'text-[#111]'],
  ['Closed P/L:', 'w-[94px]', 'text-[#111]'],
  ['RT TE:', 'w-[61px]', 'text-[#111]'],
  ['Open P/L:', 'w-[83px]', 'text-[#111]'],
  ['ORDER BAR', 'w-[90px]', 'text-[#0a8a20]'],
  ['MACROS', 'w-[67px]', 'text-[#0a8a20]'],
]

export default function App() {
  return (
    <div className="flex h-[1080px] w-[1920px] flex-col overflow-hidden bg-[#f0f0f0] font-['Liberation_Sans',sans-serif]">
      {/* title bar */}
      <div className="flex h-[28px] items-start border-b-2 border-[#3c4a58] bg-[linear-gradient(90deg,#93b2cf_0%,#c2d6e6_25%,#b4d2ea_40%,#a6cfef_55%,#98c6ee_76%,#a8d4f8_77.5%,#4a7aac_79%,#2c5f95_84%,#3a6a9e_100%)]">
        <svg viewBox="0 0 18 22" className="ml-[2px] mt-[3px] h-[20px] w-[18px]">
          <path d="M9 1c5 2 8 7 7 12-1 4-4 7-8 8C3 20 1 15 2 10 3 6 5 3 9 1z" fill="#2a62d8" />
          <path d="M9 3c2 3 3 6 2 10-1 2-3 4-5 5 0-5 0-10 3-15z" fill="#a8d0f8" />
        </svg>
        <span className="ml-[5px] mt-[5px] whitespace-pre text-[13.8px] leading-[20px] text-[#161616]">TradeStation 8.1 - STOX_FIB - FIB_TF30 - [Chart Analysis - GS:FTSEMIB  30 min  [MCEDB] SPMIB FUTURES]</span>
        <div className="ml-auto mr-[3px] flex h-[25px] overflow-hidden rounded-b-[4px] border border-t-0 border-[#30455c]">
          <div className="flex w-[38px] items-center justify-center border-r border-[#30455c] bg-[linear-gradient(180deg,#a8bccd_0%,#8ea6bc_45%,#4a6a88_55%,#6c8aa4_100%)]">
            <div className="mt-[6px] h-[5px] w-[17px] border border-[#40566c] bg-white" />
          </div>
          <div className="flex w-[35px] items-center justify-center border-r border-[#30455c] bg-[linear-gradient(180deg,#a8bccd_0%,#8ea6bc_45%,#4a6a88_55%,#6c8aa4_100%)]">
            <svg viewBox="0 0 18 16" className="h-[16px] w-[18px]" fill="none" stroke="#fff" strokeWidth="1.8">
              <path d="M5 1h12v10h-3" />
              <path d="M1.5 4.5h11v10h-11z" />
            </svg>
          </div>
          <div className="flex w-[64px] items-center justify-center bg-[linear-gradient(180deg,#e0a088_0%,#d88a70_45%,#c0401c_55%,#c8553a_100%)]">
            <svg viewBox="0 0 18 16" className="h-[16px] w-[20px]" fill="none" stroke="#fff" strokeWidth="3.6">
              <path d="M2 1l14 14M16 1L2 15" />
            </svg>
          </div>
        </div>
      </div>

      {/* menu bar */}
      <div className="flex h-[31px] items-center border-b-2 border-[#b4b8c0] bg-[linear-gradient(180deg,#ffffff_0%,#f6f8fb_30%,#e2e8f3_45%,#e6ebf5_100%)] pt-[2px]">
        <svg viewBox="0 0 18 18" className="ml-[7px] h-[18px] w-[18px]">
          <rect width="18" height="18" fill="#101418" />
          <path d="M1 11l3-3 2 2 3-6 3 5 4-6" stroke="#20c040" fill="none" />
          <path d="M1 15h16" stroke="#c02020" strokeDasharray="2 1" />
        </svg>
        <div className="ml-[9px] flex text-[15px] text-[#1a1a1a]">
          {menus.map(([m, w]) => <span key={m} className={w}>{m}</span>)}
        </div>
        <div className="ml-auto flex gap-px pr-px">
          <MdiButton kind="min" />
          <MdiButton kind="max" />
          <MdiButton kind="close" />
        </div>
      </div>

      {/* toolbar */}
      <div className="flex h-[30px] items-center border-b-2 border-[#9c9c9c] bg-[#f1f1f1] pl-[25px]">
        <Grip />
        <div className="w-[3px]" />
        {bar1.map((t, i) => <ToolItem key={i} item={t} />)}
        <div className="ml-[4px] flex h-[23px] w-[135px] items-center justify-between rounded-[3px] border border-[#e0e0e0] bg-white pl-[2px] pr-[5px] text-[13.5px] text-[#808080]">
          <span className="whitespace-nowrap">Type a symbol/co</span>
          <svg viewBox="0 0 10 6" className="h-[6px] w-[10px]"><path d="M0 0h10L5 6z" fill="#111" /></svg>
        </div>
        <svg viewBox="0 0 6 10" className="ml-[6px] h-[10px] w-[6px]"><path d="M0 0l6 5-6 5z" fill="#111" /></svg>
        <div className="w-[8px]" />
        <ToolItem item="search" />
        <div className="w-[21px]" />
        <Grip />
        <div className="w-[3px]" />
        {bar2.map((t, i) => <ToolItem key={i} item={t} />)}
        <div className="w-[26px]" />
        <Grip />
        <div className="w-[3px]" />
        {bar3.map((t, i) => <ToolItem key={i} item={t} />)}
        <span className="ml-[5px] text-[12px] text-[#222]">abc</span>
      </div>

      {/* chart window */}
      <div className="relative h-[929px] shrink-0 border-x-2 border-[#a8a8a8] bg-black">
        <Chart />
        <div className="absolute left-[1855px] top-[8px] flex gap-px">
          <MdiButton kind="min" />
          <MdiButton kind="max" />
          <MdiButton kind="close" />
        </div>
      </div>

      {/* scrollbar */}
      <div className="flex h-[22px] items-center justify-between bg-[#f0f0f0] pl-[10px] pr-[10px]">
        <svg viewBox="0 0 5 9" className="h-[9px] w-[5px]"><path d="M5 0v9L0 4.5z" fill="#606060" /></svg>
        <div className="flex items-center gap-[19px]">
          <div className="flex h-[17px] w-[18px] items-center justify-center gap-px border border-[#a0a0a0] bg-[#e8e8e8]">
            <div className="h-[8px] w-px bg-[#666]" />
            <div className="h-[8px] w-px bg-[#666]" />
            <div className="h-[8px] w-px bg-[#666]" />
          </div>
          <svg viewBox="0 0 5 9" className="h-[9px] w-[5px]"><path d="M0 0v9l5-4.5z" fill="#606060" /></svg>
        </div>
      </div>

      {/* workspace tabs */}
      <div className="flex h-[18px] items-stretch border-y border-[#222] bg-[#f4f4f4] text-[11.5px] leading-[16px] text-[#111]">
        <div className="flex w-[71.5px] items-center gap-px pl-[3px]">
          {['M6 1v8L2 5zM1 1v8', 'M6 1v8L2 5z', 'M2 1v8l4-4z', 'M2 1v8l4-4zM7 1v8'].map((d) => (
            <div key={d} className="flex h-[15px] w-[14px] items-center justify-center border border-[#c8c8c8] bg-[#eeeeee]">
              <svg viewBox="0 0 8 10" className="h-[9px] w-[7px]"><path d={d} fill="#8a8a8a" stroke="#8a8a8a" strokeWidth="0.6" /></svg>
            </div>
          ))}
        </div>
        {tabs.map(([t, w]) => (
          <div key={t} className={`relative pl-[11.5px] ${w} ${t === 'FIB_TF30' ? 'bg-white font-bold' : ''}`}>
            <svg viewBox="0 0 8 16" className="absolute left-[-4px] top-0 h-[16px] w-[8px]"><path d="M1 0l6 16" stroke="#222" fill="none" /></svg>
            <span className="whitespace-pre">{t}</span>
          </div>
        ))}
        <svg viewBox="0 0 8 16" className="ml-[6px] h-[16px] w-[8px]"><path d="M7 0L1 16" stroke="#222" fill="none" /></svg>
      </div>

      {/* status bar */}
      <div className="flex h-[20px] items-center bg-[#f0f0f0] text-[14px] leading-[20px] text-[#111]">
        <span className="pl-[3px]">For Help, press F1</span>
        <span className="ml-auto pr-[16px]">Acct:</span>
        {statusCells.map(([t, w, c]) => (
          <div key={t} className={`h-full border-l border-[#c4c4c4] pl-[4px] ${w} ${c} whitespace-nowrap`}>{t}</div>
        ))}
        <div className="flex h-full w-[19px] items-center justify-center border-l border-[#c4c4c4]">
          <div className="h-[11px] w-[9px] rounded-full bg-[radial-gradient(circle_at_40%_30%,#ff9a9a,#e00000_60%,#700000)]" />
        </div>
        <div className="h-full w-[124px] border-l border-[#c4c4c4] pl-[4px] whitespace-nowrap">25/05/2022 10:41</div>
      </div>
      <div className="h-[2px] bg-[#34506c]" />
    </div>
  )
}
